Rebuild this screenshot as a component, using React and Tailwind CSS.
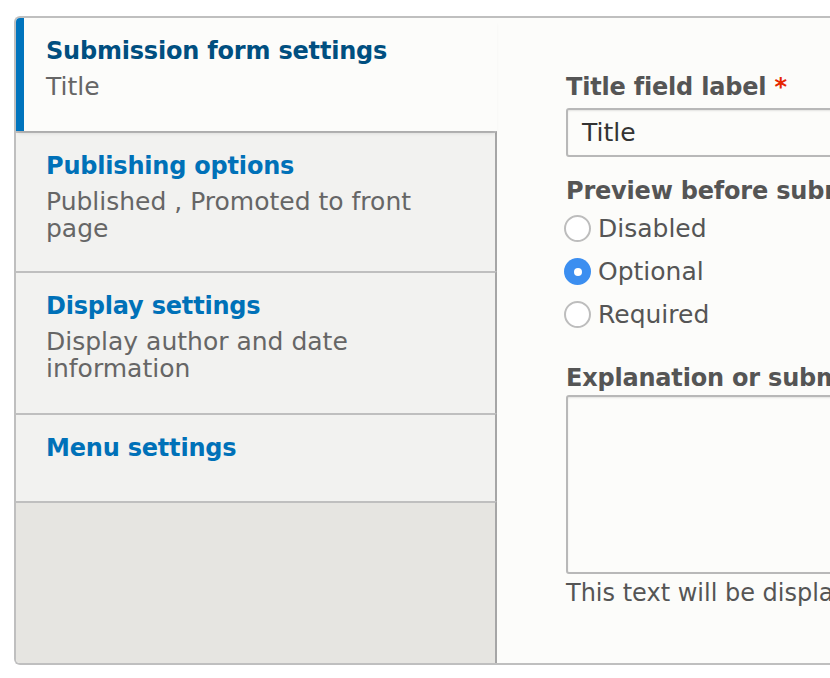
import React, { useState } from "react";

const tabs = [
  { title: "Submission form settings", summary: ["Title"], height: "h-[113px]" },
  { title: "Publishing options", summary: ["Published , Promoted to front", "page"], height: "h-[140px]" },
  { title: "Display settings", summary: ["Display author and date", "information"], height: "h-[142px]" },
  { title: "Menu settings", summary: [], height: "h-[88px]" },
];

const Radio = ({ label, checked, onChange }) => (
  <label className="flex items-center h-[43px] cursor-pointer" onClick={onChange}>
    {checked ? (
      <span className="w-[27px] h-[27px] rounded-full bg-[#3b8ef0] flex items-center justify-center">
        <span className="w-[8px] h-[8px] rounded-full bg-white" />
      </span>
    ) : (
      <span className="w-[27px] h-[27px] rounded-full border-2 border-[#bdbdbd] bg-white" />
    )}
    <span className="ml-[7px] text-[25px] text-[#555555]">{label}</span>
  </label>
);

const App = () => {
  const [active] = useState(0);
  const [preview, setPreview] = useState("optional");

  return (
    <div
      className="w-[830px] h-[678px] bg-white overflow-hidden pl-[14px] pt-[16px]"
      style={{ fontFamily: '"DejaVu Sans", sans-serif' }}
    >
      <div className="flex w-[900px] h-[649px] border-2 border-r-0 border-[#bfbfbf] rounded-l-[6px] overflow-hidden">
        {/* Vertical tabs */}
        <div className="w-[481px] shrink-0 flex flex-col bg-[#e6e5e1]">
          {tabs.map((tab, i) =>
            i === active ? (
              <div
                key={tab.title}
                className={`${tab.height} relative z-10 bg-[#fcfcfa] border-l-[8px] border-[#0074bd] pl-[22px] pt-[18px] shadow-[0_4px_4px_-2px_rgba(0,0,0,0.12)]`}
              >
                <div className="text-[24px] leading-[30px] font-bold text-[#004f80] -tracking-[0.2px]">{tab.title}</div>
                <div className="mt-[7px] text-[25px] leading-[27px] text-[#666666]">
                  {tab.summary.map((s) => (
                    <div key={s}>{s}</div>
                  ))}
                </div>
              </div>
            ) : (
              <div
                key={tab.title}
                className={`${tab.height} bg-[#f2f2f0] border-t-2 border-r-2 border-t-[#bfbfbf] border-r-[#a6a6a6] pl-[30px] pt-[18px]`}
              >
                <div className="text-[24px] leading-[30px] font-bold text-[#0071b8] -tracking-[0.2px]">{tab.title}</div>
                {tab.summary.length > 0 && (
                  <div className="mt-[7px] text-[25px] leading-[27px] text-[#666666]">
                    {tab.summary.map((s) => (
                      <div key={s}>{s}</div>
                    ))}
                  </div>
                )}
              </div>
            )
          )}
          <div className="flex-1 border-t-2 border-r-2 border-t-[#bfbfbf] border-r-[#a6a6a6]" />
        </div>

        {/* Pane */}
        <div className="flex-1 bg-[#fcfcfa] pl-[69px] pt-[54px] whitespace-nowrap">
          <div className="text-[24px] leading-[30px] font-bold text-[#555555] -tracking-[0.2px]">
            Title field label <span className="text-[#e62600]">*</span>
          </div>
          <div className="mt-[6px] h-[49px] w-[400px] border-2 border-[#b8b8b8] rounded-[3px] bg-[#fcfcfa] flex items-center pl-[14px] text-[25px] text-[#333333] shadow-[inset_0_1px_2px_rgba(0,0,0,0.1)]">
            Title
          </div>
          <div className="mt-[19px] text-[24px] leading-[30px] font-bold text-[#555555] -tracking-[0.2px]">
            Preview before submitting
          </div>
          <div className="-ml-[2px] mt-[1px] flex flex-col">
            <Radio label="Disabled" checked={preview === "disabled"} onChange={() => setPreview("disabled")} />
            <Radio label="Optional" checked={preview === "optional"} onChange={() => setPreview("optional")} />
            <Radio label="Required" checked={preview === "required"} onChange={() => setPreview("required")} />
          </div>
          <div className="mt-[27px] text-[24px] leading-[30px] font-bold text-[#555555] -tracking-[0.2px]">
            Explanation or submission guidelines
          </div>
          <div className="mt-[2px] h-[179px] w-[400px] border-2 border-[#b8b8b8] rounded-[3px] bg-[#fcfcfa] shadow-[inset_0_1px_2px_rgba(0,0,0,0.1)]" />
          <div className="mt-[4px] text-[24px] leading-[30px] text-[#555555]">
            This text will be displayed at the top of the page
          </div>
        </div>
      </div>
    </div>
  );
};

export default App;
